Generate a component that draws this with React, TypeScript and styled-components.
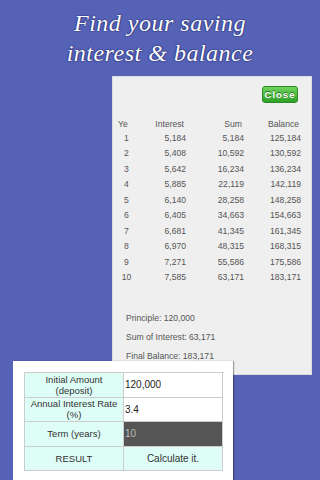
import { Fragment } from "react";
import styled, { createGlobalStyle } from "styled-components";

const GlobalStyle = createGlobalStyle`
  html, body {
    margin: 0;
    padding: 0;
  }
  body {
    font-family: "Liberation Sans", Arial, sans-serif;
  }
`;

// Yearly rows shown in the result popup
const rows = [
  [1, "5,184", "5,184", "125,184"],
  [2, "5,408", "10,592", "130,592"],
  [3, "5,642", "16,234", "136,234"],
  [4, "5,885", "22,119", "142,119"],
  [5, "6,140", "28,258", "148,258"],
  [6, "6,405", "34,663", "154,663"],
  [7, "6,681", "41,345", "161,345"],
  [8, "6,970", "48,315", "168,315"],
  [9, "7,271", "55,586", "175,586"],
  [10, "7,585", "63,171", "183,171"],
];

const Page = styled.div`
  width: 320px;
  height: 480px;
  overflow: hidden;
  background: #5662b6;
  display: flex;
  flex-direction: column;
`;

const Title = styled.h1`
  margin: 0;
  height: 76px;
  box-sizing: border-box;
  padding-top: 8px;
  font-family: "Liberation Serif", "DejaVu Serif", serif;
  font-style: italic;
  font-weight: normal;
  font-size: 24px;
  line-height: 30px;
  letter-spacing: 0.5px;
  text-align: center;
  color: #fff;
  text-shadow: 0 0 2px #1d2466, 0 0 1px #1d2466;
`;

const ResultPanel = styled.div`
  margin-left: 112px;
  width: 200px;
  height: 299px;
  box-sizing: border-box;
  background: #efefef;
  border: 1px solid #dcdcdc;
  display: flex;
  flex-direction: column;
  color: #555;
  font-size: 8.6px;
`;

const CloseRow = styled.div`
  display: flex;
  justify-content: flex-end;
  padding: 9px 13px 0 0;
`;

const CloseButton = styled.button`
  width: 36px;
  height: 17px;
  padding: 0;
  border: 1px solid #2b8a22;
  border-radius: 3px;
  background: linear-gradient(#6fd45c, #2f9f27);
  color: #fff;
  font-family: "Liberation Sans", Arial, sans-serif;
  font-weight: bold;
  font-size: 9.5px;
  letter-spacing: 1px;
  text-shadow: 0 -1px 0 #1f6f18;
`;

const DataGrid = styled.div`
  display: grid;
  grid-template-columns: 17px 51px 58px 57px;
  grid-template-rows: 13px;
  grid-auto-rows: 15.5px;
  align-items: center;
  margin: 14px 0 0 5px;
`;

const Cell = styled.div<{ $align: "left" | "center" | "right" }>`
  text-align: ${(p) => p.$align};
  white-space: nowrap;
`;

const HeadCell = styled(Cell)`
  padding-right: 2px;
`;

const Summary = styled.div`
  display: flex;
  flex-direction: column;
  gap: 8.5px;
  margin: 28px 0 0 13px;
  line-height: 10.5px;
`;

const FormPanel = styled.div`
  position: relative;
  z-index: 1;
  margin: -14px 0 0 13px;
  width: 220px;
  flex: 1;
  background: #fff;
  box-shadow: 1px 0 1px rgba(0, 0, 0, 0.35);
  padding: 11px 0 0 11px;
  box-sizing: border-box;
`;

const FormTable = styled.div`
  display: grid;
  grid-template-columns: 99px 99px;
  grid-auto-rows: 24.5px;
  border-top: 1px solid #ccc;
  border-left: 1px solid #ccc;
  width: 199px;
`;

const Label = styled.div`
  display: flex;
  align-items: center;
  justify-content: center;
  text-align: center;
  background: #defdf7;
  border-right: 1px solid #ccc;
  border-bottom: 1px solid #ccc;
  color: #333;
  font-size: 9.5px;
  line-height: 11px;
`;

const Field = styled.div<{ $dark?: boolean }>`
  display: flex;
  align-items: center;
  padding-left: 1px;
  background: ${(p) => (p.$dark ? "#555" : "#fff")};
  color: ${(p) => (p.$dark ? "#bbb" : "#222")};
  border-right: 1px solid #ccc;
  border-bottom: 1px solid #ccc;
  font-size: 10px;
`;

const ActionCell = styled(Label)`
  font-size: 10px;
`;

export default function App() {
  return (
    <>
      <GlobalStyle />
      <Page>
        <Title>
          Find your saving
          <br />
          interest &amp; balance
        </Title>
        <ResultPanel>
          <CloseRow>
            <CloseButton>Close</CloseButton>
          </CloseRow>
          <DataGrid>
            <Cell $align="left">Ye</Cell>
            <HeadCell $align="right">Interest</HeadCell>
            <HeadCell $align="right">Sum</HeadCell>
            <HeadCell $align="right">Balance</HeadCell>
            {rows.map((r) => (
              <Fragment key={r[0]}>
                <Cell $align="center">{r[0]}</Cell>
                <Cell $align="right">{r[1]}</Cell>
                <Cell $align="right">{r[2]}</Cell>
                <Cell $align="right">{r[3]}</Cell>
              </Fragment>
            ))}
          </DataGrid>
          <Summary>
            <div>Principle: 120,000</div>
            <div>Sum of Interest: 63,171</div>
            <div>Final Balance: 183,171</div>
          </Summary>
        </ResultPanel>
        <FormPanel>
          <FormTable>
            <Label>
              Initial Amount
              <br />
              (deposit)
            </Label>
            <Field>120,000</Field>
            <Label>
              Annual Interest Rate
              <br />
              (%)
            </Label>
            <Field>3.4</Field>
            <Label>Term (years)</Label>
            <Field $dark>10</Field>
            <Label>RESULT</Label>
            <ActionCell>Calculate it.</ActionCell>
          </FormTable>
        </FormPanel>
      </Page>
    </>
  );
}
